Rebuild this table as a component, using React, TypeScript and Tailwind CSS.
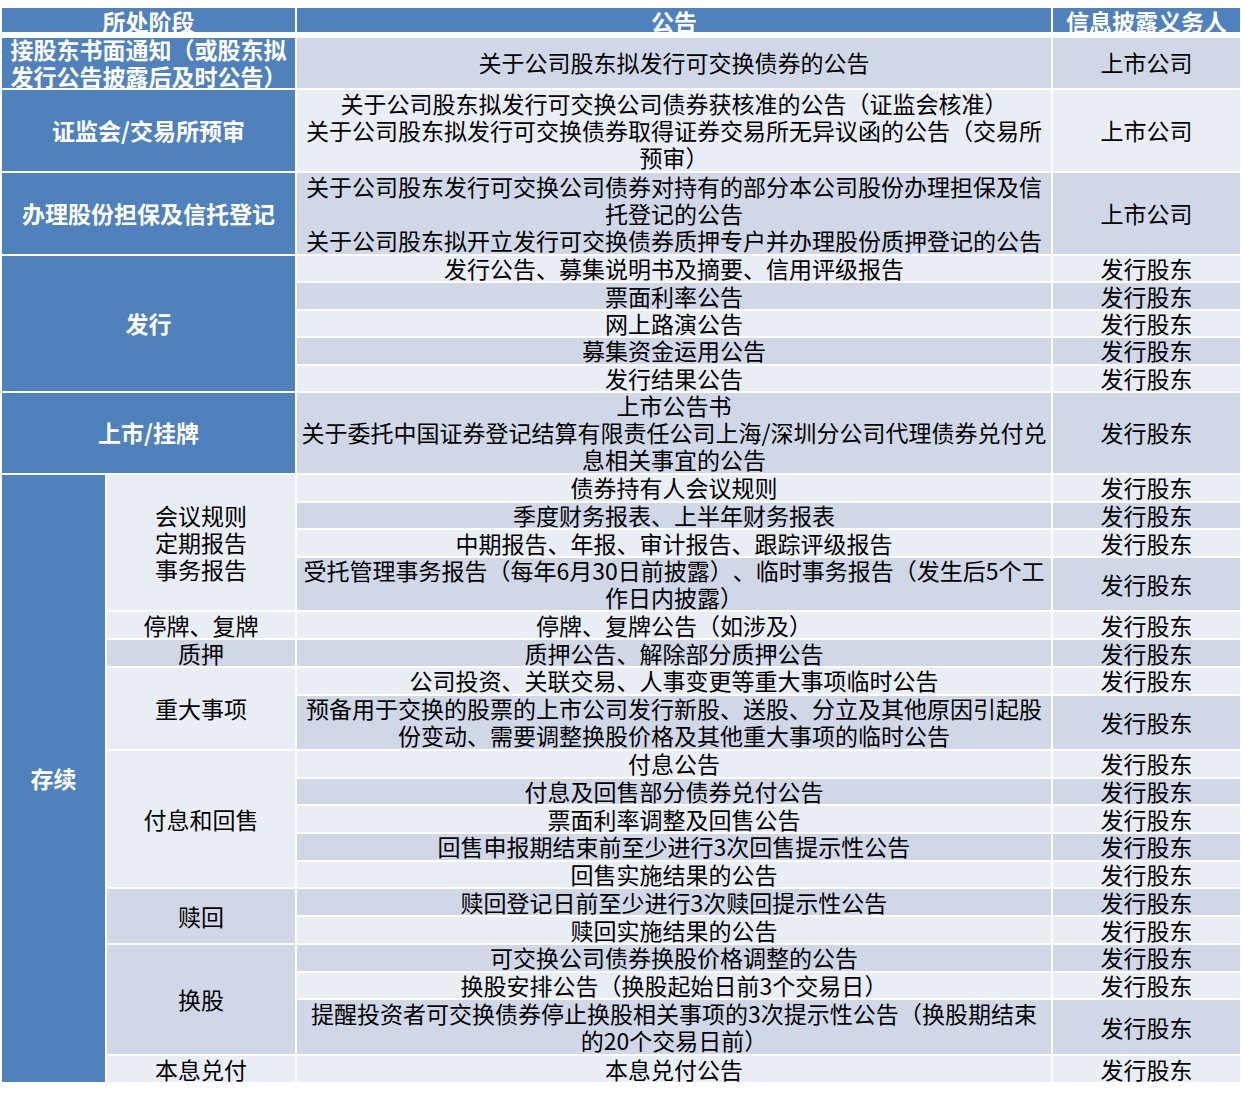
import React from "react";

const BLUE = "bg-[#4F81BD]";
const DARK = "bg-[#D0D8E8]";
const LIGHT = "bg-[#E9EDF4]";

function Txt({ s }: { s: string }) {
  const parts = s.split(/([（）])/);
  return (
    <>
      {parts.map((p, i) =>
        p === "（" || p === "）" ? (
          <span key={i} className="font-['Noto_Sans_CJK_TC',sans-serif]">
            {p}
          </span>
        ) : (
          <React.Fragment key={i}>{p}</React.Fragment>
        )
      )}
    </>
  );
}

function Lines({ lines }: { lines: string[] }) {
  return (
    <>
      {lines.map((l, i) => (
        <div key={i} className="whitespace-nowrap">
          <Txt s={l} />
        </div>
      ))}
    </>
  );
}

function Stage({ lines, cls }: { lines: string[]; cls: string }) {
  return (
    <div
      className={`${cls} ${BLUE} flex flex-col items-center justify-center overflow-hidden text-center font-bold text-white`}
    >
      <Lines lines={lines} />
    </div>
  );
}

function Sub({ lines, cls, shade }: { lines: string[]; cls: string; shade: string }) {
  return (
    <div className={`${cls} ${shade} flex flex-col items-center justify-center overflow-hidden text-center`}>
      <Lines lines={lines} />
    </div>
  );
}

function Row({ notice, who, shade }: { notice: string[]; who: string; shade: string }) {
  return (
    <>
      <div className={`${shade} flex flex-col items-center justify-center overflow-hidden text-center`}>
        <Lines lines={notice} />
      </div>
      <div className={`${shade} flex flex-col items-center justify-center overflow-hidden text-center`}>
        <div className="whitespace-nowrap">{who}</div>
      </div>
    </>
  );
}

export default function App() {
  const G = "发行股东";
  return (
    <div className="min-h-[1098px] w-[1241px] bg-white pl-[2px] pt-[8px] font-['Noto_Sans_CJK_SC',sans-serif] text-[23px] leading-[27px] text-black [text-spacing-trim:space-all]">
      <div className="mb-[5.7px] grid h-[24px] grid-cols-[293px_754px_187px] gap-x-[2px]">
        <div className={`${BLUE} flex items-start justify-center overflow-hidden font-bold text-white`}>
          <div className="whitespace-nowrap">所处阶段</div>
        </div>
        <div className={`${BLUE} flex items-start justify-center overflow-hidden font-bold text-white`}>
          <div className="whitespace-nowrap">公告</div>
        </div>
        <div className={`${BLUE} flex items-start justify-center overflow-hidden font-bold text-white`}>
          <div className="whitespace-nowrap">信息披露义务人</div>
        </div>
      </div>

      <div className="grid grid-cols-[103px_188px_754px_187px] grid-rows-[50.6px_80.7px_81px_25.4px_25.4px_25.4px_25.4px_25.4px_80px_25.7px_25.7px_25.7px_52.5px_25.7px_25.7px_25.7px_53.5px_25.7px_25.7px_25.7px_25.7px_25.7px_25.7px_25.7px_25.7px_25.7px_54px_25.7px] gap-[2px]">
        {/* R1 */}
        <Stage cls="col-span-2" lines={["接股东书面通知（或股东拟", "发行公告披露后及时公告）"]} />
        <Row shade={DARK} notice={["关于公司股东拟发行可交换债券的公告"]} who="上市公司" />
        {/* R2 */}
        <Stage cls="col-span-2" lines={["证监会/交易所预审"]} />
        <Row
          shade={LIGHT}
          notice={[
            "关于公司股东拟发行可交换公司债券获核准的公告（证监会核准）",
            "关于公司股东拟发行可交换债券取得证券交易所无异议函的公告（交易所",
            "预审）",
          ]}
          who="上市公司"
        />
        {/* R3 */}
        <Stage cls="col-span-2" lines={["办理股份担保及信托登记"]} />
        <Row
          shade={DARK}
          notice={[
            "关于公司股东发行可交换公司债券对持有的部分本公司股份办理担保及信",
            "托登记的公告",
            "关于公司股东拟开立发行可交换债券质押专户并办理股份质押登记的公告",
          ]}
          who="上市公司"
        />
        {/* 发行 */}
        <Stage cls="col-span-2 row-span-5" lines={["发行"]} />
        <Row shade={LIGHT} notice={["发行公告、募集说明书及摘要、信用评级报告"]} who={G} />
        <Row shade={DARK} notice={["票面利率公告"]} who={G} />
        <Row shade={LIGHT} notice={["网上路演公告"]} who={G} />
        <Row shade={DARK} notice={["募集资金运用公告"]} who={G} />
        <Row shade={LIGHT} notice={["发行结果公告"]} who={G} />
        {/* 上市 */}
        <Stage cls="col-span-2" lines={["上市/挂牌"]} />
        <Row
          shade={DARK}
          notice={[
            "上市公告书",
            "关于委托中国证券登记结算有限责任公司上海/深圳分公司代理债券兑付兑",
            "息相关事宜的公告",
          ]}
          who={G}
        />
        {/* 存续 */}
        <Stage cls="row-span-19" lines={["存续"]} />
        <Sub cls="row-span-4" shade={LIGHT} lines={["会议规则", "定期报告", "事务报告"]} />
        <Row shade={LIGHT} notice={["债券持有人会议规则"]} who={G} />
        <Row shade={DARK} notice={["季度财务报表、上半年财务报表"]} who={G} />
        <Row shade={LIGHT} notice={["中期报告、年报、审计报告、跟踪评级报告"]} who={G} />
        <Row
          shade={DARK}
          notice={[
            "受托管理事务报告（每年6月30日前披露）、临时事务报告（发生后5个工",
            "作日内披露）",
          ]}
          who={G}
        />
        <Sub cls="" shade={LIGHT} lines={["停牌、复牌"]} />
        <Row shade={LIGHT} notice={["停牌、复牌公告（如涉及）"]} who={G} />
        <Sub cls="" shade={DARK} lines={["质押"]} />
        <Row shade={DARK} notice={["质押公告、解除部分质押公告"]} who={G} />
        <Sub cls="row-span-2" shade={LIGHT} lines={["重大事项"]} />
        <Row shade={LIGHT} notice={["公司投资、关联交易、人事变更等重大事项临时公告"]} who={G} />
        <Row
          shade={DARK}
          notice={[
            "预备用于交换的股票的上市公司发行新股、送股、分立及其他原因引起股",
            "份变动、需要调整换股价格及其他重大事项的临时公告",
          ]}
          who={G}
        />
        <Sub cls="row-span-5" shade={LIGHT} lines={["付息和回售"]} />
        <Row shade={LIGHT} notice={["付息公告"]} who={G} />
        <Row shade={DARK} notice={["付息及回售部分债券兑付公告"]} who={G} />
        <Row shade={LIGHT} notice={["票面利率调整及回售公告"]} who={G} />
        <Row shade={DARK} notice={["回售申报期结束前至少进行3次回售提示性公告"]} who={G} />
        <Row shade={LIGHT} notice={["回售实施结果的公告"]} who={G} />
        <Sub cls="row-span-2" shade={DARK} lines={["赎回"]} />
        <Row shade={DARK} notice={["赎回登记日前至少进行3次赎回提示性公告"]} who={G} />
        <Row shade={LIGHT} notice={["赎回实施结果的公告"]} who={G} />
        <Sub cls="row-span-3" shade={DARK} lines={["换股"]} />
        <Row shade={DARK} notice={["可交换公司债券换股价格调整的公告"]} who={G} />
        <Row shade={LIGHT} notice={["换股安排公告（换股起始日前3个交易日）"]} who={G} />
        <Row
          shade={DARK}
          notice={[
            "提醒投资者可交换债券停止换股相关事项的3次提示性公告（换股期结束",
            "的20个交易日前）",
          ]}
          who={G}
        />
        <Sub cls="" shade={LIGHT} lines={["本息兑付"]} />
        <Row shade={LIGHT} notice={["本息兑付公告"]} who={G} />
      </div>
    </div>
  );
}
